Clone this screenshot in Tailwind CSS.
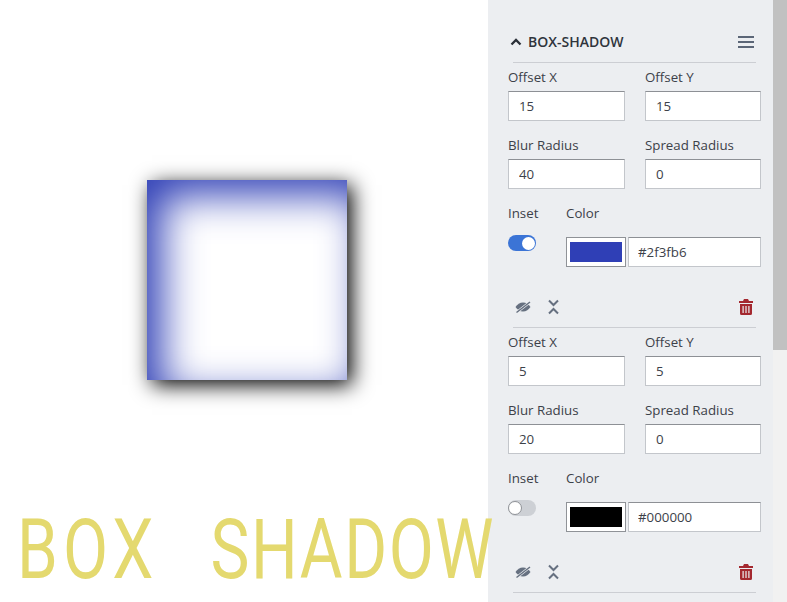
<!DOCTYPE html>
<html lang="en">
<head>
  <meta charset="UTF-8" />
  <title>Box Shadow</title>
  <script src="https://cdn.jsdelivr.net/npm/@tailwindcss/browser@4"></script>
</head>
<body class="bg-white h-[602px] overflow-hidden font-['Open_Sans',sans-serif] text-[13.3px] text-[#3c4149]">
  <div class="relative flex h-[602px] w-[787px] overflow-hidden">
    <!-- Preview -->
    <main class="w-[488px] shrink-0 pl-[147px] pt-[180px]">
      <div class="w-[200px] h-[200px] bg-white shadow-[inset_15px_15px_40px_0_#2f3fb6,5px_5px_20px_0_#000]"></div>
    </main>

    <!-- Controls -->
    <aside class="w-[285px] shrink-0 bg-[#eceef1] pl-[20px] h-[602px] overflow-hidden">
      <div class="flex items-center justify-between h-[63px] pt-[21px] ml-[5px] w-[243px] border-b border-[#ccced3]">
        <div class="flex items-center">
          <svg class="w-[14px] h-[12px] -ml-[4px]" viewBox="0 0 14 12" fill="none" stroke="#2b3038" stroke-width="2.3"><path d="M2.500 8.500 7 4l4.500 4.500" /></svg>
          <span class="font-semibold text-[14px] text-[#2f343c] ml-[5px]">BOX-SHADOW</span>
        </div>
        <svg class="w-[16px] h-[14px] mr-[2px]" viewBox="0 0 16 14" fill="none" stroke="#5b6677" stroke-width="2"><path d="M0 2h16M0 7h16M0 12h16" /></svg>
      </div>

      <!-- Shadow 1 -->
      <section class="pt-[4px]">
        <div class="grid grid-cols-[117px_116px] gap-x-[20px]">
          <div>
            <label class="block h-[20px] leading-[20px]">Offset X</label>
            <input value="15" class="mt-[4px] block w-full h-[30px] bg-white border border-[#c3c6cb] border-t-[#8d9095] pl-[10px] outline-none" />
          </div>
          <div>
            <label class="block h-[20px] leading-[20px]">Offset Y</label>
            <input value="15" class="mt-[4px] block w-full h-[30px] bg-white border border-[#c3c6cb] border-t-[#8d9095] pl-[10px] outline-none" />
          </div>
          <div class="mt-[14px]">
            <label class="block h-[20px] leading-[20px]">Blur Radius</label>
            <input value="40" class="mt-[4px] block w-full h-[30px] bg-white border border-[#c3c6cb] border-t-[#8d9095] pl-[10px] outline-none" />
          </div>
          <div class="mt-[14px]">
            <label class="block h-[20px] leading-[20px]">Spread Radius</label>
            <input value="0" class="mt-[4px] block w-full h-[30px] bg-white border border-[#c3c6cb] border-t-[#8d9095] pl-[10px] outline-none" />
          </div>
        </div>
        <div class="flex mt-[14px]">
          <div class="w-[58px]">
            <label class="block h-[20px] leading-[20px]">Inset</label>
            <div class="mt-[12px] w-[28px] h-[16px] rounded-full bg-[#3b74d6] relative">
              <div class="absolute right-[1px] top-[1.500px] w-[13px] h-[13px] rounded-full bg-white"></div>
            </div>
          </div>
          <div>
            <label class="block h-[20px] leading-[20px]">Color</label>
            <div class="mt-[14px] flex gap-[2px]">
              <div class="w-[60px] h-[30px] bg-white border border-[#8f9297] px-[3px] py-[4px]"><div class="w-full h-full bg-[#2f3fb6]"></div></div>
              <input value="#2f3fb6" class="block w-[133px] h-[30px] bg-white border border-[#c3c6cb] border-t-[#8d9095] pl-[9px] outline-none" />
            </div>
          </div>
        </div>
        <div class="flex items-center justify-between pt-[32px] pb-[12px] w-[245px]">
          <div class="flex items-center">
            <svg class="ml-[7px] w-[16px] h-[14px]" viewBox="0 0 16 14"><path fill="#667080" d="M.5 7C2.300 4.400 4.800 2.500 8 2.500s5.700 1.900 7.500 4.500c-1.800 2.600-4.300 4.500-7.500 4.500S2.300 9.600.5 7z" /><path fill="none" stroke="#eceef1" stroke-width="2.800" d="M1.500 12.500 15 2" /><path fill="none" stroke="#667080" stroke-width="1.500" d="M1.500 12.500 15 2" /></svg>
            <svg class="ml-[17px] w-[11px] h-[16px]" viewBox="0 0 11 16" fill="none" stroke="#667080" stroke-width="2"><path d="M1 1.500 5.500 6 10 1.500M1 14.500 5.500 10 10 14.500" /></svg>
          </div>
          <svg class="w-[14px] h-[16px]" viewBox="0 0 14 16" fill="#a4282f"><path d="M5 0h4l1 2h4v2H0V2h4zM1 5h12v9.500a1.500 1.500 0 0 1-1.500 1.500h-9A1.500 1.500 0 0 1 1 14.500zm2.500 2v7h1.200V7zm2.900 0v7h1.200V7zm2.900 0v7h1.200V7z" /></svg>
        </div>
        <div class="ml-[5px] w-[243px] border-b border-[#ccced3]"></div>
      </section>

      <!-- Shadow 2 -->
      <section class="pt-[4px]">
        <div class="grid grid-cols-[117px_116px] gap-x-[20px]">
          <div>
            <label class="block h-[20px] leading-[20px]">Offset X</label>
            <input value="5" class="mt-[4px] block w-full h-[30px] bg-white border border-[#c3c6cb] border-t-[#8d9095] pl-[10px] outline-none" />
          </div>
          <div>
            <label class="block h-[20px] leading-[20px]">Offset Y</label>
            <input value="5" class="mt-[4px] block w-full h-[30px] bg-white border border-[#c3c6cb] border-t-[#8d9095] pl-[10px] outline-none" />
          </div>
          <div class="mt-[14px]">
            <label class="block h-[20px] leading-[20px]">Blur Radius</label>
            <input value="20" class="mt-[4px] block w-full h-[30px] bg-white border border-[#c3c6cb] border-t-[#8d9095] pl-[10px] outline-none" />
          </div>
          <div class="mt-[14px]">
            <label class="block h-[20px] leading-[20px]">Spread Radius</label>
            <input value="0" class="mt-[4px] block w-full h-[30px] bg-white border border-[#c3c6cb] border-t-[#8d9095] pl-[10px] outline-none" />
          </div>
        </div>
        <div class="flex mt-[14px]">
          <div class="w-[58px]">
            <label class="block h-[20px] leading-[20px]">Inset</label>
            <div class="mt-[12px] w-[28px] h-[16px] rounded-full bg-[#cdd0d5] relative">
              <div class="absolute left-0 top-[1px] w-[14px] h-[14px] rounded-full bg-white border border-[#8f9297]"></div>
            </div>
          </div>
          <div>
            <label class="block h-[20px] leading-[20px]">Color</label>
            <div class="mt-[14px] flex gap-[2px]">
              <div class="w-[60px] h-[30px] bg-white border border-[#8f9297] px-[3px] py-[4px]"><div class="w-full h-full bg-black"></div></div>
              <input value="#000000" class="block w-[133px] h-[30px] bg-white border border-[#c3c6cb] border-t-[#8d9095] pl-[9px] outline-none" />
            </div>
          </div>
        </div>
        <div class="flex items-center justify-between pt-[32px] pb-[12px] w-[245px]">
          <div class="flex items-center">
            <svg class="ml-[7px] w-[16px] h-[14px]" viewBox="0 0 16 14"><path fill="#667080" d="M.5 7C2.300 4.400 4.800 2.500 8 2.500s5.700 1.900 7.500 4.500c-1.800 2.600-4.300 4.500-7.500 4.500S2.300 9.600.5 7z" /><path fill="none" stroke="#eceef1" stroke-width="2.800" d="M1.500 12.500 15 2" /><path fill="none" stroke="#667080" stroke-width="1.500" d="M1.500 12.500 15 2" /></svg>
            <svg class="ml-[17px] w-[11px] h-[16px]" viewBox="0 0 11 16" fill="none" stroke="#667080" stroke-width="2"><path d="M1 1.500 5.500 6 10 1.500M1 14.500 5.500 10 10 14.500" /></svg>
          </div>
          <svg class="w-[14px] h-[16px]" viewBox="0 0 14 16" fill="#a4282f"><path d="M5 0h4l1 2h4v2H0V2h4zM1 5h12v9.500a1.500 1.500 0 0 1-1.500 1.500h-9A1.500 1.500 0 0 1 1 14.500zm2.500 2v7h1.200V7zm2.900 0v7h1.200V7zm2.900 0v7h1.200V7z" /></svg>
        </div>
        <div class="ml-[5px] w-[243px] border-b border-[#ccced3]"></div>
      </section>
    </aside>

    <!-- Scrollbar -->
    <div class="w-[14px] shrink-0 bg-[#f1f1f1] h-[602px]">
      <div class="h-[350px] bg-[#c1c1c1]"></div>
    </div>

    <!-- Title, runs slightly over the panel -->
    <div class="absolute left-[17px] top-[500px] origin-left scale-x-[0.78] whitespace-nowrap font-['Roboto',sans-serif] [font-weight:450] text-[84px] leading-[100px] text-[#e4d96f]"><span class="tracking-[6.5px]">BOX</span><span class="tracking-[4px] [word-spacing:8.5px]">&nbsp;&nbsp;</span><span class="tracking-[2px]">SHADOW</span></div>
  </div>
</body>
</html>
